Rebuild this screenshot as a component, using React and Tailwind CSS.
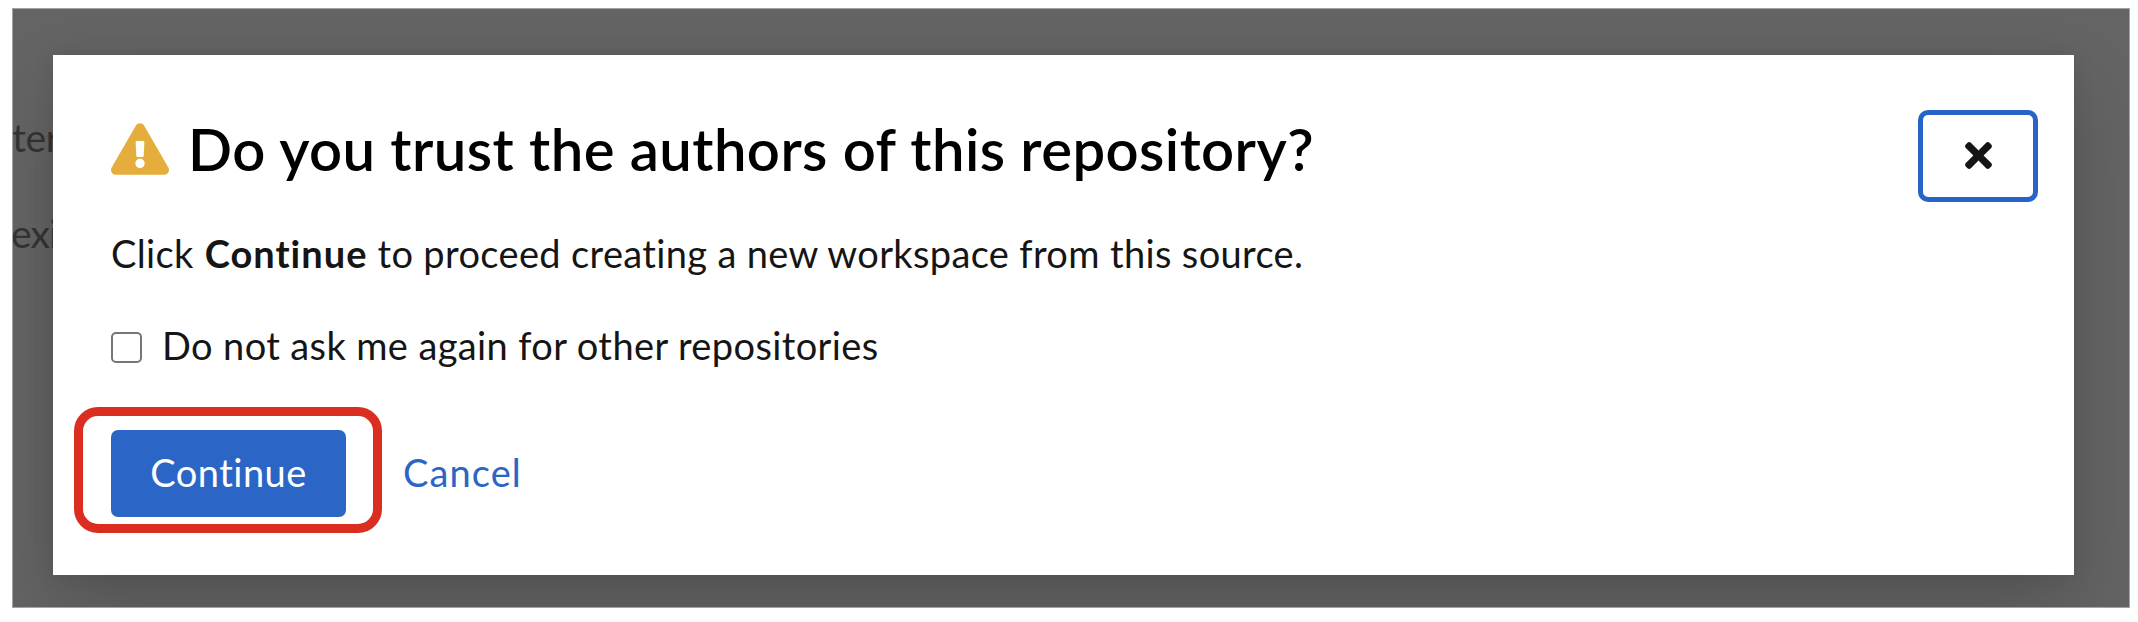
import { FaExclamationTriangle, FaTimes } from "react-icons/fa";

function Backdrop({ children }) {
  return (
    <div className="relative h-[600px] w-[2118px] overflow-hidden border border-[#a3a3a3] bg-[#646464]">
      <div className="absolute top-[96px] left-0 text-[39px] leading-[64px] whitespace-nowrap text-[#333436]">
        <p className="-ml-px tracking-[-0.4px]">ter</p>
        <p className="mt-[32px] -ml-[2px] tracking-[-0.8px]">exi</p>
      </div>
      {children}
    </div>
  );
}

function Header() {
  return (
    <header className="flex h-[70px] items-start justify-between">
      <h1 className="flex h-[70px] items-center text-[58px] leading-[70px] font-semibold tracking-[0.43px] text-black">
        <FaExclamationTriangle className="mr-[19px] h-[52px] w-[58px] text-[#e5ad3c]" />
        Do you trust the authors of this repository?
      </h1>
      <button
        aria-label="Close"
        className="-mt-[4px] mr-[36px] flex h-[92px] w-[120px] items-center justify-center rounded-[10px] border-[5px] border-[#2863c8] pb-[2px]"
      >
        <FaTimes className="h-[39px] w-[27px] text-[#151515]" />
      </button>
    </header>
  );
}

function TrustDialog() {
  return (
    <section className="relative mt-[46px] ml-[40px] h-[520px] w-[2021px] bg-white pt-[59px] pl-[58px] text-[38px] leading-[58px] text-[#151515] shadow-[0_38px_76px_0_rgba(3,3,3,0.16),0_0_19px_0_rgba(3,3,3,0.1)]">
      <Header />
      <p className="mt-[40px] tracking-[0.35px]">
        Click <b className="ml-px font-bold tracking-[1px]">Continue</b> to proceed creating a new workspace from this source.
      </p>
      <label className="mt-[36px] flex items-center">
        <input
          type="checkbox"
          className="mr-[20px] h-[31px] w-[31px] appearance-none rounded-[5px] border-2 border-[#767676] bg-white"
        />
        <span className="-mt-[2px] pb-[2px] tracking-[0.38px]">Do not ask me again for other repositories</span>
      </label>
      <div className="mt-[31px] -ml-[37px] flex items-start">
        <div className="h-[126px] w-[308px] rounded-[24px] border-[9px] border-[#da2e20] pt-[14px] pl-[28px]">
          <button className="h-[87px] w-[235px] rounded-[7px] bg-[#2b65c6] pb-[3px] tracking-[0.5px] text-white">Continue</button>
        </div>
        <button className="mt-[23px] ml-[21px] h-[87px] pb-[3px] tracking-[1.1px] text-[#2b65c6]">Cancel</button>
      </div>
    </section>
  );
}

export default function App() {
  return (
    <main className="h-[622px] w-[2138px] overflow-hidden bg-white pt-[8px] pl-[12px] font-['Lato',sans-serif]">
      <Backdrop>
        <TrustDialog />
      </Backdrop>
    </main>
  );
}
